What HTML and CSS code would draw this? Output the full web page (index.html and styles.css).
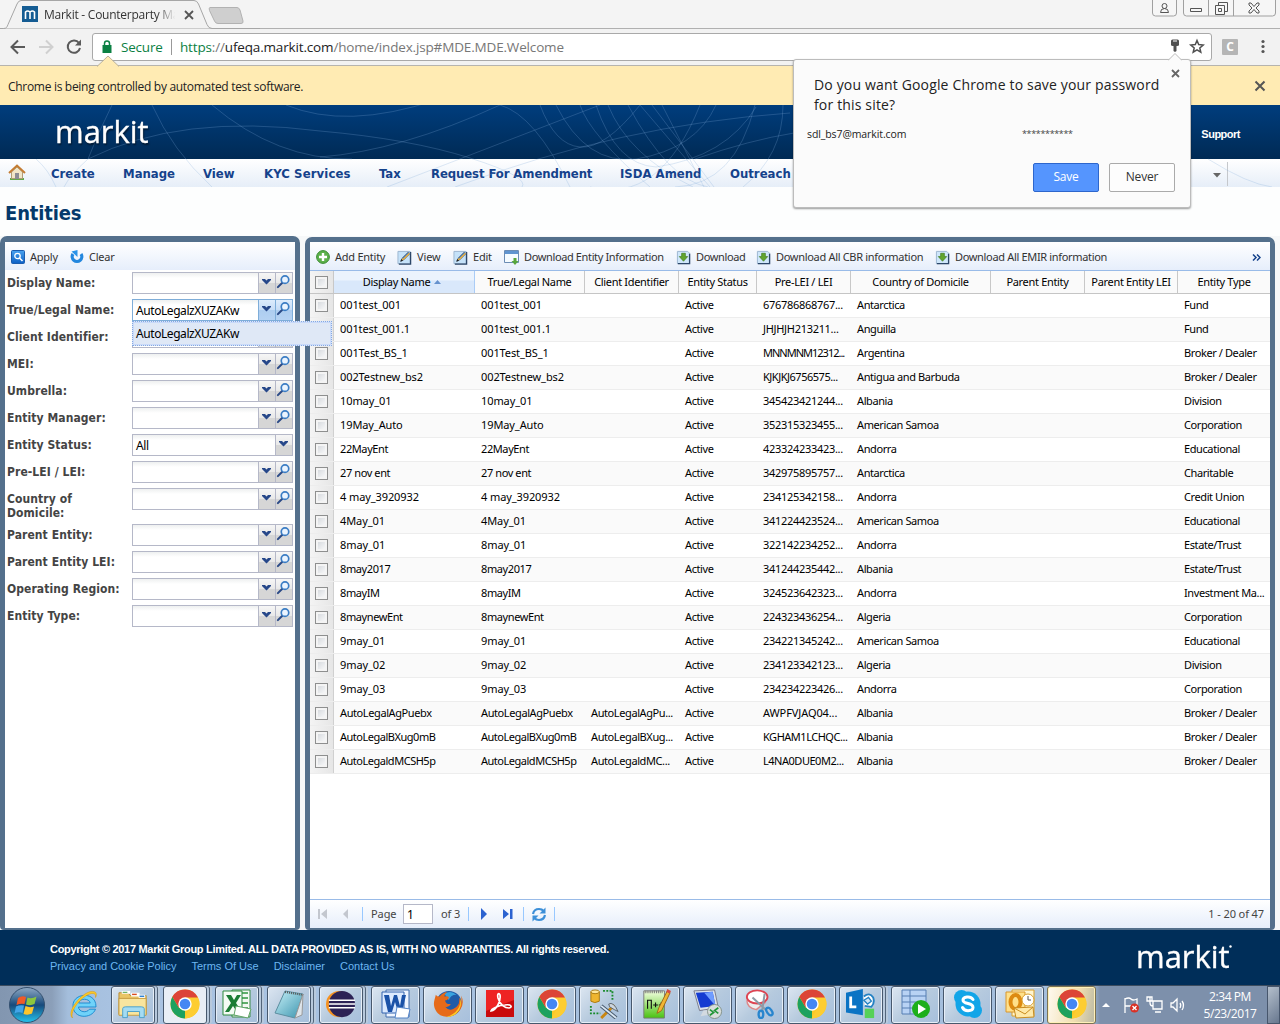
FILE: index.html
```html
<!DOCTYPE html>
<html lang="en">
<head>
<meta charset="utf-8">
<title>Markit - Counterparty Manager</title>
<link rel="stylesheet" href="styles.css">
</head>
<body>
<svg class="defs" aria-hidden="true">
  <defs>
    <linearGradient id="gBlue" x1="0" y1="0" x2="0" y2="1"><stop offset="0" stop-color="#4aa3f0"/><stop offset="1" stop-color="#0c5fc4"/></linearGradient>
    <linearGradient id="gOrb" x1="0" y1="0" x2="0" y2="1"><stop offset="0" stop-color="#8fa9c4"/><stop offset=".5" stop-color="#174a7c"/><stop offset="1" stop-color="#25c4ee"/></linearGradient>
    <linearGradient id="gPad" x1="0" y1="0" x2="1" y2="1"><stop offset="0" stop-color="#c8f1f8"/><stop offset="1" stop-color="#3a93ae"/></linearGradient>
    <linearGradient id="gGreen" x1="0" y1="0" x2="0" y2="1"><stop offset="0" stop-color="#f4ffe0"/><stop offset="1" stop-color="#49c211"/></linearGradient>
    <symbol id="mag" viewBox="0 0 16 16"><path d="M2 14 7 9" stroke="#2b4a86" stroke-width="2.2" stroke-linecap="round"/><circle cx="9.600" cy="6" r="4" fill="#eaf4ff" stroke="#3b7dc4" stroke-width="1.800"/></symbol>
    <symbol id="pencil" viewBox="0 0 16 16"><path d="M1 1.500h13v13H1z" fill="#c5e2f9" stroke="#9bb4cf"/><path d="M14.500 2v13H2" fill="none" stroke="#2c4668" stroke-width="1.400"/><path d="m4 12 1.500-3.500L12 2l2 2-6.500 6.500z" fill="#f0b23c" stroke="#4f678a" stroke-width=".6"/><path d="m3.500 12.500 1-3 2 2z" fill="#222"/><path d="m5.500 8.500 6.500-6.500.8.800-6.500 6.500z" fill="#3e74b8"/></symbol>
    <symbol id="down" viewBox="0 0 16 16"><path d="M1.500 1.500h11l2 2v11h-13z" fill="#cfe7fb" stroke="#9bb4cf"/><path d="M14.500 4v10.500H2" fill="none" stroke="#2c4668" stroke-width="1.400"/><path d="M6 3.500h4V7h2.500L8 12 3.500 7H6z" fill="#62a52e" stroke="#3e7a1c" stroke-width=".7"/></symbol>
    <symbol id="chrome" viewBox="0 0 30 30"><circle cx="15" cy="15" r="14.500" fill="#fbc926"/><path d="M2.400 7.800 8.700 18.600 15 21.500 15 29.500A14.500 14.500 0 0 1 2.400 7.800z" fill="#1da15f"/><path d="M15 8.500h12.900A14.500 14.500 0 0 1 14.500 29.500L20.900 18z" fill="#fdcd32"/><path d="M2.400 7.800A14.500 14.500 0 0 1 27.900 8.500H15L8.700 18.600z" fill="#dc4437"/><circle cx="15" cy="15" r="6.700" fill="#fff"/><circle cx="15" cy="15" r="5.300" fill="#4587f3"/></symbol>
    <symbol id="ie" viewBox="0 0 30 30"><path d="M27 17H9.500c.3 5 8 6.500 11 2.200h6C23 29 4 29.500 4 15.500 4 2.500 27.500 1 27 17zM9.600 13h11.600c-.8-5-10.800-5-11.600 0z" fill="#6fd2f9" stroke="#1687cd" stroke-width=".9"/><path d="M3.500 28C-3 22 12 3 22 1.500c5-.6 6.500 2 4.500 6 1-5-4-5-9-2C8 11 1 23 3.500 28z" fill="#fbc927" stroke="#d9960f" stroke-width=".5"/></symbol>
    <symbol id="folder" viewBox="0 0 32 30"><path d="M1 3h10l2 3h17v20H1z" fill="#e9c566" stroke="#b78c34"/><path d="M4 1h9v3H4zM14 3h9v4h-9zM22 5h7v4h-7z" fill="#fff"/><path d="M5 2h5v1H5z" fill="#3a9a3a"/><path d="M15 4h5v1.500h-5z" fill="#d84b20"/><path d="M23 6h5v1.500h-5z" fill="#2b7fd0"/><path d="M1 9h29v18H1z" fill="#f9e59e" stroke="#c49a3f"/><path d="M5 29.500V20q0-2 3-2h17q3 0 3 2v9.500h-5V23H10v6.500z" fill="#a5dcf2" stroke="#4a9fc9"/></symbol>
    <symbol id="excel" viewBox="0 0 30 30"><path d="M10 1h18v27H10z" fill="#f3f8f2" stroke="#3b8a4a"/><path d="M12 4h14M12 9h14M12 14h14M12 19h14M12 24h14" stroke="#5fae6a" stroke-width="2"/><path d="M1 2h19v24H1z" fill="#f4fbf4" stroke="#2c8a3f"/><path d="M4 6h5l3 5 3-5h4l-5 8 6 9h-5l-4-6-4 6H3l6-9z" fill="#1b7c34"/><path d="m14 17 15 3-3 9-14-3z" fill="#fff" stroke="#62a568"/></symbol>
    <symbol id="notepad" viewBox="0 0 30 30"><path d="M11 2 29 5 21 29 1 24z" fill="url(#gPad)" stroke="#5c8ea0"/><path d="m29 5-1 21-7 3z" fill="#dfe5ea" stroke="#999"/><path d="m11 3 18 3" stroke="#555" stroke-width="2" stroke-dasharray="1 1"/></symbol>
    <symbol id="eclipse" viewBox="0 0 32 30"><circle cx="14" cy="15" r="14" fill="#f59120"/><circle cx="17" cy="15" r="14" fill="#2c2255"/><path d="M3 11h28M3 15h28M3 19h28" stroke="#fff" stroke-width="1.700"/></symbol>
    <symbol id="wordapp" viewBox="0 0 30 30"><path d="M5 1h23v27H5z" fill="#eff5ff" stroke="#416cac"/><path d="M1 3h22v21H1z" fill="#dceaff" stroke="#3263ae"/><path d="M3 6h5l2 11 3-11h3l3 11 2-11h4l-4 17h-4l-3-10-3 10H7z" fill="#1b52a8"/><path d="m16 18 13 2-2 9H14z" fill="#fff" stroke="#5484c7"/></symbol>
    <symbol id="firefox" viewBox="0 0 32 30"><circle cx="17" cy="14.500" r="13.500" fill="#205ba8"/><path d="M12 4q7-4 13 1-7 0-8 6z" fill="#39a3df"/><path d="M3 5q1 2 4 2 3-4 8-5-3 3-3 5 4-1 5 1-1 3-4 3 0 3 3 4l3 0q-2 4-6 3 4 5 9 2 7-3 6-12 3 4 1 9 2-4 1-11 4 8-1 15C21 31 8 31 3 22-1 15 2 10 3 5z" fill="#e66a19"/><path d="M29 8q3 10-4 17-5 4-11 4 17-6 15-21z" fill="#fcc925"/></symbol>
    <symbol id="adobe" viewBox="0 0 30 30"><path d="M1 1h28v27H1z" fill="#c90a0c"/><path d="M1 1h28v10L1 22z" fill="#ee2424"/><path d="M6 22c5-1 10-9 9-16-1-3-3-1-2 3 2 7 7 10 11 10 4-1 2-4-4-3-6 0-14 4-14 6z" fill="none" stroke="#fff" stroke-width="1.700"/></symbol>
    <symbol id="tools" viewBox="0 0 32 32"><path d="M2 3v10q4 3 9 0V3z" fill="#efb52f" stroke="#a9780e"/><ellipse cx="6.500" cy="3" rx="4.500" ry="2" fill="#ffe79a" stroke="#a9780e"/><path d="M15 2h10v10M2 18v8h10" fill="none" stroke="#178a2a" stroke-width="2" stroke-dasharray="2 1.500"/><path d="m13 31 14-14" stroke="#c98612" stroke-width="3"/><path d="M21 16q5-3 10 8l-4-2-5-3z" fill="#ccd5de" stroke="#59636d"/><path d="m13 18 16 13" stroke="#47586b" stroke-width="4"/><path d="m13 18 16 13" stroke="#d7e6f2" stroke-width="2"/></symbol>
    <symbol id="npp" viewBox="0 0 30 32"><path d="M2 2h22v29H2z" fill="url(#gGreen)" stroke="#777"/><path d="M3 3h20" stroke="#777" stroke-width="3" stroke-dasharray="1 1"/><path d="M6 21v-9h4v9m2-4h5m-2.500-2.500v5m3.500-2.500h5m-2.500-2.500v5" stroke="#111" fill="none" stroke-width="1.200"/><path d="m16 26 2-6L27 2l3 2-9 19z" fill="#f1b534" stroke="#9b6718"/><path d="m26 3 1-3 4 2-1.500 3z" fill="#d44c43"/></symbol>
    <symbol id="remote" viewBox="0 0 32 32"><path d="m1 2 22-1 4 19-20 3z" fill="#dbe3ec" stroke="#778"/><path d="m3 4 18-1 3 15-16 2z" fill="#143bd1"/><path d="m12 4 9-1 3 15z" fill="#6f9cff"/><path d="m11 23 8-1 2 5-13 2z" fill="#d3dae0"/><circle cx="23" cy="24" r="7.500" fill="#d9dedb" stroke="#81908a"/><path d="m18 22 4 3-4 3m9-8-4 3 4 3" fill="none" stroke="#229638" stroke-width="1.800"/></symbol>
    <symbol id="snip" viewBox="0 0 32 32"><path d="M2 12q0 8 10 10l10-8" fill="#eee" stroke="#dd8888" stroke-width="1.500"/><ellipse cx="13" cy="8.500" rx="11" ry="7" fill="#fff" stroke="#dd4452" stroke-width="2"/><path d="m8 9 15 14M21 5l-3 20" stroke="#8d9ba7" stroke-width="2.200"/><ellipse cx="17" cy="27" rx="2.500" ry="4" fill="none" stroke="#2885ce" stroke-width="2.500"/><ellipse cx="26" cy="24" rx="2.500" ry="4.500" transform="rotate(-35 26 24)" fill="none" stroke="#2885ce" stroke-width="2.500"/></symbol>
    <symbol id="lync" viewBox="0 0 32 32"><path d="M0 4 18 0v28L0 25z" fill="#0b74c4"/><path d="M5 8v11h6" stroke="#fff" stroke-width="3" fill="none"/><path d="M19 8q6-5 10 1 2 6-2 10l-7-1" fill="#fff" stroke="#2381c3" stroke-width="2"/><path d="m19 12 5-3 3 4-4 3z" fill="#cfe6f7" stroke="#2381c3" stroke-width="1.500"/><path d="M20 21h10v10H20z" fill="#56d158"/></symbol>
    <symbol id="sheet" viewBox="0 0 30 30"><path d="M1 1h24v24H1z" fill="#b8d2f4" stroke="#577fb3"/><path d="M1 7h24M1 13h24M1 19h24M9 1v24" stroke="#577fb3"/><circle cx="20" cy="20" r="9" fill="#1daf1b"/><path d="m17 15 8 5-8 5z" fill="#fff"/></symbol>
    <symbol id="skype" viewBox="0 0 30 30"><circle cx="15" cy="15" r="12.500" fill="#12a5e8"/><circle cx="8.500" cy="8.500" r="7.500" fill="#12a5e8"/><circle cx="21.500" cy="21.500" r="7.500" fill="#12a5e8"/><path d="M20 10.500q-2-3-6-2.500-4 .5-4 3t5 3.500q5 1 5 4t-5 3.200q-4 0-5.500-3.200" fill="none" stroke="#fff" stroke-width="3" stroke-linecap="round"/></symbol>
    <symbol id="outlook" viewBox="0 0 30 30"><path d="M7 1h22v26H7z" fill="#fff5d0" stroke="#d8a02d"/><path d="M1 3h19v20H1z" fill="#ffe08a" stroke="#d8962d"/><ellipse cx="10.500" cy="13" rx="5" ry="7" fill="none" stroke="#dd8a11" stroke-width="4"/><circle cx="23" cy="11" r="6" fill="#fff" stroke="#d8a02d"/><path d="M23 7v4h3" stroke="#555" fill="none"/><path d="m9 19 19-1 1 10-18 1z" fill="#ffe9a8" stroke="#c98c20"/><path d="m9 19 11 6 8-7" fill="none" stroke="#c98c20"/></symbol>
  </defs>
</svg>

<div class="tabstrip">
  <svg class="tabshape" width="260" height="29" viewBox="0 0 260 29"><path d="M0 28.500h3.500c3 0 3.500-1.500 4.500-4L17 4q1.500-3.500 4-3.500h173q3 0 4.500 3.500l8.500 20.500q1.500 4 5 4H260V29H0z" fill="#f2f2f2" stroke="#a6a6a6"/><path d="M210 7.500h27q2 0 3 2.500l3 11q.5 2.500-2 2.500h-23q-2.500 0-3.500-2.500l-5-10.500q-1-3 .5-3z" fill="#cfcfcf" stroke="#b2b2b2"/></svg>
  <span class="fav"><svg width="16" height="16"><path d="M3.500 13V6q2-2 4.500 0v7M8 6q2.500-2 4.500 0v7" fill="none" stroke="#fff" stroke-width="1.600"/></svg></span>
  <span class="tabtitle">Markit - Counterparty Ma</span>
  <svg class="tabx" width="10" height="10"><path d="m1 1 8 8m0-8-8 8" stroke="#555" stroke-width="1.800"/></svg>
  <svg class="winbtns" width="128" height="18"><g fill="#f6f6f6" stroke="#a0a0a0"><path d="M.5 0v13q0 3 3 3h18q3 0 3-3V0M31.500 0v13q0 3 3 3h86q3 0 3-3V0M56.500 0v16M81.500 0v16"/></g><g fill="none" stroke="#555"><circle cx="12.500" cy="6" r="2.500"/><path d="M8.500 12.500q0-4 4-4t4 4zM38.500 8.500h11v3h-11zM66.500 5V2.500h9v9H73M63.500 5.500h9v9h-9zM66.500 8.500h3v3h-3z"/><path d="m97 3 2 0 3 3.500L105 3h2v2l-3 3 3 3v2h-2l-3-3.500L99 13h-2v-2l3-3-3-3z"/></g></svg>
</div>

<div class="toolbar">
  <svg width="84" height="36" fill="none" stroke="#5a5a5a" stroke-width="2"><path d="M25 18H12m6-6.500L11.500 18l6.500 6.500"/><path d="M39 18h13m-6-6.500 6.500 6.500-6.500 6.500" stroke="#d0d0d0"/><path d="M79 14a6.200 6.200 0 1 0 1 5"/><path d="M81 10.500v6h-6z" fill="#5a5a5a" stroke="none"/></svg>
  <div class="omnibox">
    <svg width="12" height="16"><path d="M1.500 6h9v8h-9z" fill="#0b8043"/><path d="M3.500 7V4.500a2.500 2.500 0 0 1 5 0V7" fill="none" stroke="#0b8043" stroke-width="1.500"/></svg>
    <span class="secure">Secure</span><i class="vline"></i>
    <span class="url"><b>https</b><em>://</em>ufeqa.markit.com<em>/home/index.jsp#MDE.MDE.Welcome</em></span>
    <svg class="omniicons" width="36" height="18"><path d="M2 3q0-1.500 1.500-1.500h5Q10 1.500 10 3v4Q10 8 8 8H7.500v5l-1.500 1-1.500-1V8H4Q2 8 2 7z" fill="#505050"/><path d="M4 3h4" stroke="#fff"/><path d="m28 2.500 1.700 4.100 4.500.4-3.400 2.900 1 4.300L28 11.900l-3.800 2.300 1-4.300L21.800 7l4.500-.4z" fill="none" stroke="#505050" stroke-width="1.500"/></svg>
  </div>
  <span class="ext">C</span>
  <svg width="6" height="16" fill="#555"><circle cx="3" cy="2.500" r="1.600"/><circle cx="3" cy="7.500" r="1.600"/><circle cx="3" cy="12.500" r="1.600"/></svg>
</div>

<div class="infobar"><span>Chrome is being controlled by automated test software.</span>
  <svg class="notch" width="22" height="12"><path d="M0 11.500 11 1l11 10.500" fill="#ffebb3" stroke="#b9b09a"/></svg>
  <svg class="ix" width="12" height="12"><path d="m1.500 1.500 9 9m0-9-9 9" stroke="#555" stroke-width="2"/></svg>
</div>

<div class="masthead">
  <svg class="arcs" width="1280" height="82" fill="none">
    <g stroke="#7fabd8" stroke-opacity=".26"><path d="M112 0Q98 28 88 54M152 0q20 45 60 82M212 0q65 55 140 54M88 54Q180 8 320 26M320 26q90 8 150 27t52 29M286 0q60 25 150-5M320 52Q400 46 500 0M387 82 600 0M455 82Q620 20 790 8M500 0q35 10 70 82M540 0q15 40 40 42t60-42M556 0q30 60 80 54 60-10 80-54M580 0q10 30 70 82M596 0q20 60 60 62 70-10 100-60M608 0q20 50 85 82M628 0q40 75 80 82M640 0l70 82M652 0l62 82M662 0l42 82M700 0q-40 100-110 82M755 0q-20 80-80 82M783 0q0 50-40 82M695 54Q750 35 794 28M88 54Q70 70 64 82M36 54q12 10 20 28M1208 54q40 25 64 28"/></g>
  </svg>
  <div class="brand"><span class="logo">markit</span><span class="support">Support</span></div>
  <div class="nav">
    <svg class="home" width="18" height="17"><path d="M2 14h14v2H2z" fill="#63a849"/><path d="M3.500 8 9 3l5.500 5v6.500h-11z" fill="#f1e6c8" stroke="#b19d77"/><path d="M7 9h4v6H7z" fill="#8c8c94"/><path d="M1 9 9 1.500 17 9" fill="none" stroke="#c47c32" stroke-width="2"/></svg>
    <a class="n1">Create</a><a class="n2">Manage</a><a class="n3">View</a><a class="n4">KYC Services</a><a class="n5">Tax</a><a class="n6">Request For Amendment</a><a class="n7">ISDA Amend</a><a class="n8">Outreach</a>
    <span class="navmore"><svg width="8" height="5"><path d="M0 0h8L4 4.500z" fill="#666"/></svg></span>
  </div>
</div>

<h1>Entities</h1>

<main>
  <section class="panel filters">
    <div class="bar">
      <svg width="14" height="14"><rect x=".5" y=".5" width="13" height="13" rx="1" fill="url(#gBlue)" stroke="#1b5cae"/><circle cx="6.500" cy="6" r="2.700" fill="none" stroke="#fff" stroke-width="1.300"/><path d="m8.500 8 3 3" stroke="#fff" stroke-width="1.600"/></svg><span class="apply">Apply</span>
      <svg width="14" height="14"><path d="M3 4A4.800 4.800 0 1 0 11 4" fill="none" stroke="#2387de" stroke-width="3.200"/><path d="M7.500 0v7L1.500 1.500z" fill="#2a93e8"/></svg><span>Clear</span>
    </div>
    <form id="form"></form>
  </section>
  <section class="panel grid">
    <div class="bar">
      <svg width="14" height="14"><circle cx="7" cy="7" r="6.400" fill="#5cb04a" stroke="#3c8c35"/><path d="M7 3v8M3 7h8" stroke="#fff" stroke-width="2.400"/></svg><span class="t1">Add Entity</span>
      <svg width="15" height="15"><use href="#pencil"/></svg><span class="t2">View</span>
      <svg width="15" height="15"><use href="#pencil"/></svg><span class="t3">Edit</span>
      <svg width="15" height="15"><path d="M.5.500h14v12H.5z" fill="#f5fbff" stroke="#6b8cb4"/><path d="M1 1h13v3H1z" fill="#5f94d0"/><path d="M9.500 8h3v3h2L11 15l-3.500-4h2z" fill="#57a63c"/></svg><span class="t4">Download Entity Information</span>
      <svg width="15" height="15"><use href="#down"/></svg><span class="t5">Download</span>
      <svg width="15" height="15"><use href="#down"/></svg><span class="t6">Download All CBR information</span>
      <svg width="15" height="15"><use href="#down"/></svg><span class="t7">Download All EMIR information</span>
      <svg class="chev" width="9" height="7" fill="none" stroke="#15428b" stroke-width="1.500"><path d="m1 .5 3 3-3 3M5 .5l3 3-3 3"/></svg>
    </div>
    <div class="row head"><div class="ck"><i></i></div><div class="sorted">Display Name<svg width="7" height="4"><path d="M0 4 3.500 0 7 4z" fill="#6591cd"/></svg></div><div>True/Legal Name</div><div>Client Identifier</div><div>Entity Status</div><div>Pre-LEI / LEI</div><div>Country of Domicile</div><div>Parent Entity</div><div>Parent Entity LEI</div><div>Entity Type</div></div>
    <div id="rows"></div>
    <div class="pager">
      <svg width="12" height="12" fill="#c3c7cf"><path d="M1 1h2v10H1zM10 1v10L4 6z"/></svg>
      <svg class="p2" width="8" height="12" fill="#c3c7cf"><path d="M6 1v10L1 6z"/></svg><i></i>
      <span class="pg">Page</span><span class="pin">1</span><span class="of">of 3</span><i></i>
      <svg class="p3" width="8" height="12" fill="#2b62d0"><path d="M1 0v12l6-6z"/></svg>
      <svg class="p4" width="11" height="12" fill="#2b62d0"><path d="M1 1v10l6-5zM8 1h2.500v10H8z"/></svg><i></i>
      <svg class="p5" width="16" height="15" fill="none" stroke="#3c8fd8" stroke-width="2.200"><path d="M2 7q1-5 6-5 3 0 4.500 2M14 8q-1 5-6 5-3 0-4.500-2"/><path d="M14.500.500v6h-6zM1.500 14.500v-6h6z" fill="#3c8fd8" stroke="none"/></svg><i></i>
      <span class="count">1 - 20 of 47</span>
    </div>
  </section>
</main>

<footer>
  <div><p class="copy">Copyright © 2017 Markit Group Limited. ALL DATA PROVIDED AS IS, WITH NO WARRANTIES. All rights reserved.</p>
  <p class="links"><a>Privacy and Cookie Policy</a><a>Terms Of Use</a><a>Disclaimer</a><a>Contact Us</a></p></div>
  <div class="flogo"><span class="logo">markit</span><svg width="3" height="3"><circle cx="1.500" cy="1.500" r="1.200" fill="#fff"/></svg></div>
</footer>

<div class="taskbar">
  <svg class="orb" width="38" height="38"><circle cx="19" cy="19" r="17.500" fill="url(#gOrb)" stroke="#34506f"/><path d="M10 12q4-3 8-1l-1.500 7q-4-1-8 1z" fill="#f05a28"/><path d="M19.500 11.500q4 2 9-1L26.500 18q-4 2-8.500.5z" fill="#8cc63e"/><path d="M8 20.500q4-2 8-1L14.500 27q-4-1.500-8 .5z" fill="#42a5e8"/><path d="M17.500 20q4 2 8.500.5l-2 7q-4 2-8.500.5z" fill="#fdc52c"/></svg>
  <svg class="iebtn" width="30" height="30"><use href="#ie"/></svg>
  <div class="apps" id="apps"></div>
  <svg class="tray" width="90" height="18" fill="none" stroke="#fff" stroke-width="1.300"><path d="m1 11 4-4 4 4z" fill="#fff" stroke="none"/><path d="M24 2v15M24 3q4-2 6 0t6 0v7H24"/><circle cx="33.500" cy="12" r="4.500" fill="#d93025" stroke="none"/><path d="m31.500 10 4 4m0-4-4 4M52 5h9v8h-9zM54 16h6M49 1v6q0 3 3 3M46 1h5v4h-5z"/><path d="M70 7h2l4-4v12l-4-4h-2zM79 7q1.500 2 0 5M81 5q3 4 0 9"/></svg>
  <div class="clock">2:34 PM<br>5/23/2017</div>
  <div class="desk"></div>
</div>

<div class="bubble">
  <svg class="btip" width="14" height="8"><path d="M0 7.500 7 .5l7 7" fill="#fbfbfb" stroke="#bbb"/></svg>
  <svg class="bx" width="9" height="9"><path d="m1 1 7 7m0-7-7 7" stroke="#666" stroke-width="1.800"/></svg>
  <p class="ask">Do you want Google Chrome to save your password<br>for this site?</p>
  <div class="cred"><span>sdl_bs7@markit.com</span><span class="stars">***********</span></div>
  <div class="btns"><button class="save">Save</button><button class="never">Never</button></div>
</div>
<script src="script.js"></script>
</body>
</html>
```
FILE: styles.css
```css
* { box-sizing: border-box; }
body { margin: 0; width: 1280px; height: 1024px; overflow: hidden; background: #fff; font: 11px/14px "Noto Sans", sans-serif; color: #000; display: flex; flex-direction: column; position: relative; }
svg { display: block; flex: none; }
.defs { position: absolute; width: 0; height: 0; }
p { margin: 0; }
span, a { white-space: nowrap; }

.tabstrip { height: 29px; flex: none; background: #f4f4f4; border-bottom: 1px solid #b0b0b0; position: relative; display: flex; align-items: center; padding-left: 22px; font: 12px/16px "Open Sans", sans-serif; color: #333; }
.tabshape { position: absolute; left: 0; top: 0; }
.fav { position: relative; width: 16px; height: 16px; background: #145c93; }
.tabtitle { position: relative; margin: 2px 0 0 6px; width: 134px; letter-spacing: -.25px; -webkit-mask-image: linear-gradient(90deg, #000 84%, transparent 98%); mask-image: linear-gradient(90deg, #000 84%, transparent 98%); }
.tabx { position: relative; margin: 2px 0 0 6px; }
.winbtns { margin-left: auto; align-self: flex-start; }

.toolbar { height: 37px; flex: none; background: #f2f2f2; border-bottom: 1px solid #b6b4ae; display: flex; align-items: center; }
.omnibox { margin-left: 8px; width: 1120px; height: 28px; background: #fff; border: 1px solid #a9a9a9; border-radius: 3px; display: flex; align-items: center; padding-left: 8px; font: 13.500px/20px "Open Sans", sans-serif; }
.secure { color: #0b8043; margin-left: 8px; width: 42px; letter-spacing: -.2px; }
.vline { width: 1px; height: 16px; background: #999; margin: 0 8px; }
.url { letter-spacing: -.16px; color: #222; }
.url b { font-weight: 400; color: #0b8043; }
.url em { font-style: normal; color: #777; }
.omniicons { margin-left: auto; margin-right: 6px; }
.ext { margin: 0 22px 0 10px; width: 16px; height: 16px; background: #b5b5b5; color: #fff; font: bold 12px/16px "Open Sans", sans-serif; text-align: center; border-radius: 1px; }

.infobar { height: 39px; flex: none; background: #ffebb3; display: flex; align-items: center; justify-content: space-between; padding: 2px 14px 0 8px; font: 12px/16px "Open Sans", sans-serif; letter-spacing: -.3px; position: relative; color: #222; }
.notch { position: absolute; left: 97px; top: -11px; }
.ix { margin-top: -2px; }

.masthead { height: 82px; flex: none; position: relative; }
.arcs { position: absolute; left: 0; top: 0; pointer-events: none; }
.brand { height: 54px; background: linear-gradient(#003d7d, #002a54); display: flex; align-items: center; color: #fff; }
.logo { display: inline-block; font: 34px/40px "Open Sans", sans-serif; width: 93px; transform-origin: 0 50%; transform: scale(.91, .9); color: #fff; -webkit-text-stroke: .4px #fff; }
.brand .logo { margin: -3px 0 0 55px; text-shadow: 1px 2px 2px #0008; }
.support { font: bold 11px/14px "Liberation Sans", sans-serif; letter-spacing: -.5px; margin-left: auto; margin-right: 40px; padding-top: 4px; }
.nav { height: 28px; background: linear-gradient(#fff, #e6eef8); display: flex; align-items: center; padding: 1px 0 0 8px; font: bold 13px/16px "DejaVu Sans Condensed", "DejaVu Sans", sans-serif; color: #15428b; }
.nav a { margin-right: 28px; }
.home { margin: -2px 25px 0 0; }
.n1 { width: 44px; } .n2 { width: 52px; } .n3 { width: 33px; } .n4 { width: 87px; letter-spacing: .1px; } .n5 { width: 24px; } .n6 { width: 161px; letter-spacing: -.1px; } .n7 { width: 82px; } .n8 { width: 60px; }
.navmore { margin-left: auto; width: 67px; height: 24px; display: flex; align-items: center; }
.navmore svg { margin-top: 3px; }
.navmore::after { content: ""; width: 1px; height: 24px; background: #c5c8cc; margin-left: 6px; }

h1 { margin: 0; height: 49px; flex: none; padding: 15px 0 0 5px; font: bold 20px/22px "DejaVu Sans Condensed", "DejaVu Sans", sans-serif; color: #04396b; background: #fdfefe; letter-spacing: -.15px; }

main { height: 694px; flex: none; display: flex; gap: 5px; background: #f6f8f9; }
.panel { background: #fff; border: solid #54708c; border-width: 6px 5px 2px; border-radius: 7px 7px 4px 4px; display: flex; flex-direction: column; }
.filters { width: 300px; }
.grid { width: 970px; margin-top: 1px; border-top-width: 5px; }
.bar { height: 28px; flex: none; background: linear-gradient(#fff, #e6eefb); display: flex; align-items: center; padding-top: 2px; color: #333; }
.filters .bar { padding-left: 6px; letter-spacing: -.25px; }
.filters .bar span { margin-left: 5px; }
.bar .apply { width: 36px; }
.grid .bar { height: 29px; border-bottom: 1px solid #99bbe8; padding-left: 6px; letter-spacing: -.37px; }
.filters .bar svg + span + svg { margin-left: 4px; }
.grid .bar span { margin-left: 5px; }
.t1 { width: 62px; letter-spacing: -.25px; } .t2 { width: 36px; letter-spacing: -.1px; } .t3 { width: 31px; letter-spacing: -.2px; } .t4 { width: 152px; } .t5 { width: 60px; } .t6 { width: 159px; letter-spacing: -.31px; } .t7 { width: 160px; letter-spacing: -.33px; }
.bar .chev { margin-left: auto; margin-right: 9px; }

form { font: bold 12px/14px "DejaVu Sans Condensed", "DejaVu Sans", sans-serif; letter-spacing: .08px; color: #444; padding: 2px 2px 0 2px; }
.f { height: 27px; display: flex; position: relative; }
.f.tall { height: 36px; }
.f label { width: 125px; padding-top: 4px; white-space: nowrap; }
.f.tall label { padding-right: 40px; white-space: normal; }
.fld { width: 161px; height: 22px; border: 1px solid #b5b8c8; display: flex; background: linear-gradient(#eef0f0, #fff 5px); font: 12px/21px "Noto Sans", sans-serif; letter-spacing: -.43px; color: #000; }
.fld span { flex: 1; padding-left: 3px; }
.trig { width: 17px; border-left: 1px solid #b5b8c8; background: linear-gradient(#f6f6f6, #e8e8e8 50%, #d6d6d6 51%, #d6d6d6); display: flex; align-items: center; justify-content: center; }
.trig svg { margin: -3px 1px 0 0; }
.trig .lens { margin-top: -4px; }
.focus .fld { border-color: #7eadd9; }
.focus .trig { background: linear-gradient(#dcebfc, #c6dcf6 50%, #adcdf0 51%, #b5d2f3); border-color: #7eadd9; }
.menu { position: absolute; z-index: 3; left: 125px; top: 22px; width: 200px; height: 25px; background: #dfe8f6; border: 1px dotted #84a8e4; box-shadow: inset 0 0 0 1px #c9dafa; font: 12px/23px "Noto Sans", sans-serif; letter-spacing: -.43px; color: #000; padding-left: 3px; }

.row { display: grid; grid-template-columns: 24px 141px 110px 94px 78px 94px 140px 94px 93px 92px; height: 24px; line-height: 21px; border-bottom: 1px solid #ededed; letter-spacing: -.4px; }
.row > div { padding: 0 0 0 6px; white-space: nowrap; }
.row .num { letter-spacing: -.1px; }
.row .lei { letter-spacing: -.3px; }
.row .tight { letter-spacing: -.48px; }
.row .tighter { letter-spacing: -1px; }
.row:nth-child(even) { background: #fafafa; }
.row .ck { padding: 5px 0 0 5px; background: linear-gradient(90deg, #f4f4f4, #e6e6e6); border-right: 1px solid #d0d0d0; }
.ck i { display: block; width: 13px; height: 13px; border: 1px solid #8e8f8f; background: linear-gradient(135deg, #cfd3d8, #fff); box-shadow: inset 0 0 0 2px #f4f4f4; }
.head { height: 23px; flex: none; background: linear-gradient(#fafafa, #e3e4e6); border-bottom-color: #c5c5c5; line-height: 22px; letter-spacing: -.32px; }
.row.head > div { border-right: 1px solid #c8c8c8; text-align: center; padding: 0; }
.row.head .ck { padding: 5px 0 0 5px; }
.row.head > div:last-child { border: 0; }
.row.head .sorted { background: linear-gradient(#ebf3fd 9px, #d9e8fb 10px); border-color: #aaccf6; display: flex; align-items: center; justify-content: center; gap: 4px; padding-right: 4px; }
.pager { margin-top: auto; height: 29px; border-top: 1px solid #99bbe8; background: linear-gradient(#fff, #e6eefb); display: flex; align-items: center; padding: 0 6px 0 7px; color: #444; letter-spacing: -.1px; }
.pager i { width: 1px; height: 14px; background: #98c8ff; }
.p2 { margin: 0 12px 0 13px; } .pg { margin-left: 8px; width: 32px; }
.pin { width: 30px; height: 20px; border: 1px solid #b5b8c8; background: #fff; padding-left: 3px; font-size: 12px; line-height: 19px; color: #000; }
.of { margin-left: 8px; width: 27px; }
.p3 { margin: 0 14px 0 11px; } .p4 { margin-right: 10px; } .p5 { margin: 0 7px; }
.count { margin-left: auto; }

footer { height: 55px; flex: none; background: #002e59; color: #fff; display: flex; justify-content: space-between; padding: 12px 48px 0 50px; font: 11px/14px "Liberation Sans", sans-serif; }
.copy { font-weight: 700; letter-spacing: -.306px; }
.links { display: flex; gap: 15px; margin-top: 3px; color: #6db7f2; }
.links a:first-child { letter-spacing: -.03px; }
.flogo { display: flex; margin-top: -6px; }
.flogo svg { margin-top: 9px; }

.taskbar { height: 39px; flex: none; border-top: 1px solid #3c4c5f; background: linear-gradient(90deg, #8296b0, #8b9fb9 52px, #a4bedc 68px, #a9c3e2 120px, #a4bedc 1090px, #7d90ab 1100px); display: flex; align-items: center; color: #fff; }
.orb { margin-left: 8px; }
.iebtn { margin: 0 12px 0 23px; }
.apps { display: flex; gap: 3px; height: 38px; }
.app { width: 49px; height: 38px; display: flex; align-items: center; justify-content: center; border: 1px solid #47586d; border-radius: 3px; background: linear-gradient(135deg, #dce6f1, #b6cade 50%, #a6bfdc); box-shadow: inset 0 0 0 1px #e6eef7; }
.app svg { margin-top: -2px; }
.app.stack { width: 44px; margin-right: 5px; box-shadow: inset 0 0 0 1px #e6eef7, 2px 0 0 #b8c9dc, 3px 0 0 #53657a, 5px 0 0 #b8c9dc; }
.app.light { background: #e8eef6; }
.app.active { background: linear-gradient(100deg, #fffaf0, #f0deb0 60%, #b9b9a4); border-color: #7b7352; box-shadow: inset 0 0 0 1px #fff0b8; }
.tray { margin-left: 5px; }
.clock { margin-left: auto; width: 74px; text-align: center; font: 12px/17px "Open Sans", sans-serif; letter-spacing: -.42px; }
.desk { width: 13px; height: 38px; border: 1px solid #47566c; background: linear-gradient(135deg, #b4bfcc, #68788f); }

.bubble { position: absolute; left: 793px; top: 59px; width: 398px; height: 149px; background: #fbfbfb; border: 1px solid #bcbcbc; border-radius: 3px; box-shadow: 0 1px 2px #0006; font-family: "Open Sans", sans-serif; z-index: 5; padding: 15px 15px 0 13px; color: #222; }
.btip { position: absolute; left: 374px; top: -7px; }
.bx { position: absolute; right: 10px; top: 9px; }
.ask { font-size: 14px; line-height: 20px; padding-left: 7px; white-space: nowrap; letter-spacing: .16px; }
.cred { display: flex; justify-content: space-between; font-size: 10.500px; line-height: 16px; margin-top: 11px; letter-spacing: -.1px; }
.cred .stars { width: 153px; font-size: 9px; letter-spacing: -.35px; color: #444; }
.btns { display: flex; justify-content: flex-end; gap: 10px; margin-top: 21px; }
.btns button { width: 66px; height: 29px; font: 12px/16px "Open Sans", sans-serif; letter-spacing: -.2px; border-radius: 2px; border: 1px solid #aaa; background: #fdfdfd; padding: 0 0 2px; color: #333; }
.btns .save { background: #5595fe; border-color: #2d66cc; color: #fff; }
```
FILE: script.js
```js
const arrow = '<b class="trig"><svg width="9" height="6"><path d="M0 0h3l1.500 1.500L6 0h3v1L4.500 5.500 0 1z" fill="#27488a"/></svg></b>';
const lens = '<b class="trig"><svg class="lens" width="15" height="15"><use href="#mag"/></svg></b>';
const labels = ['Display Name:', 'True/Legal Name:', 'Client Identifier:', 'MEI:', 'Umbrella:', 'Entity Manager:', 'Entity Status:', 'Pre-LEI / LEI:', 'Country of Domicile:', 'Parent Entity:', 'Parent Entity LEI:', 'Operating Region:', 'Entity Type:'];
document.getElementById('form').innerHTML = labels.map((l, i) => {
  const cls = i === 1 ? 'f focus' : i === 8 ? 'f tall' : 'f';
  const val = i === 1 ? 'AutoLegalzXUZAKw' : i === 6 ? 'All' : '';
  const menu = i === 1 ? '<div class="menu">AutoLegalzXUZAKw</div>' : '';
  return `<div class="${cls}"><label>${l}</label><div class="fld"><span>${val}</span>${arrow}${i === 6 ? '' : lens}</div>${menu}</div>`;
}).join('');

const data = `001test_001||676786868767...|Antarctica|Fund
001test_001.1||JHJHJH213211...|Anguilla|Fund
001Test_BS_1||MNNMNM12312...|Argentina|Broker / Dealer
002Testnew_bs2||KJKJKJ6756575...|Antigua and Barbuda|Broker / Dealer
10may_01||345423421244...|Albania|Division
19May_Auto||352315323455...|American Samoa|Corporation
22MayEnt||423324233423...|Andorra|Educational
27 nov ent||342975895757...|Antarctica|Charitable
4 may_3920932||234125342158...|Andorra|Credit Union
4May_01||341224423524...|American Samoa|Educational
8may_01||322142234252...|Andorra|Estate/Trust
8may2017||341244235442...|Albania|Estate/Trust
8mayIM||324523642323...|Andorra|Investment Ma...
8maynewEnt||224323436254...|Algeria|Corporation
9may_01||234221345242...|American Samoa|Educational
9may_02||234123342123...|Algeria|Division
9may_03||234234223426...|Andorra|Corporation
AutoLegalAgPuebx|AutoLegalAgPu...|AWPFVJAQ04...|Albania|Broker / Dealer
AutoLegalBXug0mB|AutoLegalBXug...|KGHAM1LCHQC...|Albania|Broker / Dealer
AutoLegaldMCSH5p|AutoLegaldMC...|L4NA0DUE0M2...|Albania|Broker / Dealer`;
const leiClass = p => /^MNN/.test(p) ? 'tighter' : /^[KL]/.test(p) ? 'tight' : /^AW/.test(p) ? 'num' : 'lei';
const nameClass = n => /^(0|\d.*_)/.test(n) ? 'num' : /^Auto.*[Bp]$/.test(n) ? 'tight' : '';
document.getElementById('rows').innerHTML = data.split('\n').map(r => {
  const [n, c, p, d, t] = r.split('|');
  const name = nameClass(n);
  const cells = [[n, name], [n, name], [c, ''], ['Active', ''], [p, leiClass(p)], [d, ''], ['', ''], ['', ''], [t, '']].map(([v, k]) => `<div class="${k}">${v}</div>`).join('');
  return `<div class="row"><div class="ck"><i></i></div>${cells}</div>`;
}).join('');

const apps = [['folder', 'stack'], ['chrome', 'stack light'], ['excel', 'stack'], ['notepad', 'stack'], ['eclipse', 'stack'], ['wordapp', ''], ['firefox', ''], ['adobe', ''], ['chrome', ''], ['tools', ''], ['npp', ''], ['remote', ''], ['snip', ''], ['chrome', ''], ['lync', 'stack'], ['sheet', ''], ['skype', ''], ['outlook', ''], ['chrome', 'active']];
document.getElementById('apps').innerHTML = apps.map(([id, c]) => `<div class="app ${c}"><svg width="30" height="30"><use href="#${id}"/></svg></div>`).join('');
```
